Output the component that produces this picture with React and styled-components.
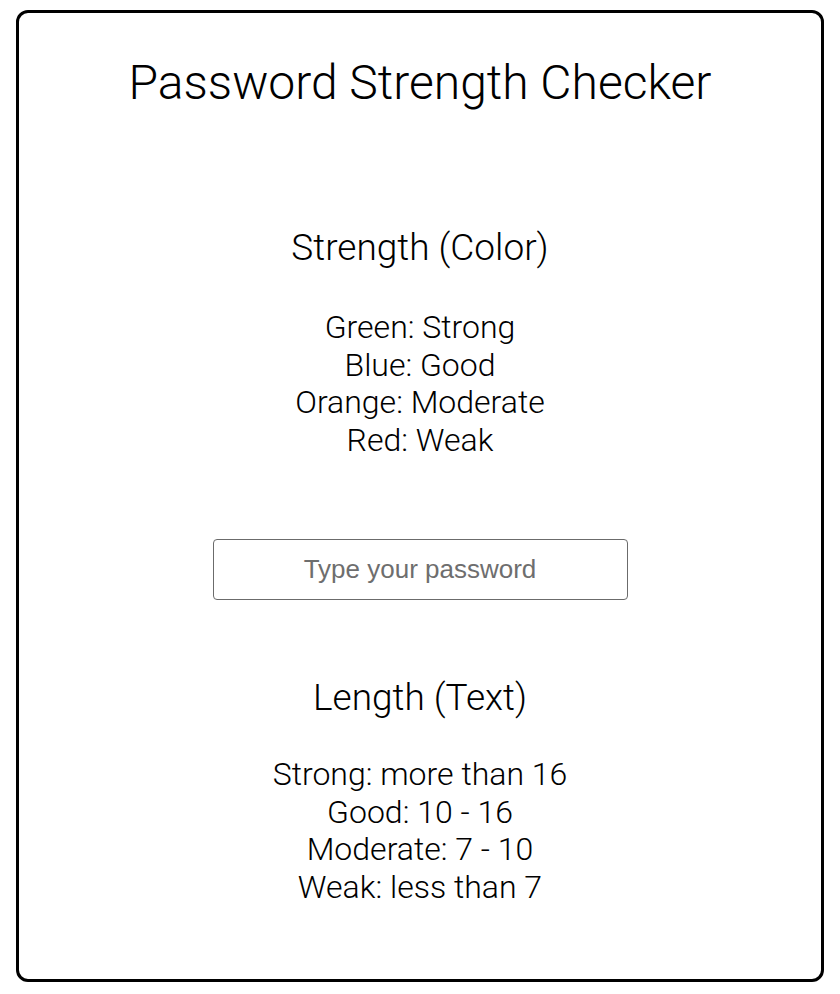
import React from 'react';
import styled, { createGlobalStyle } from 'styled-components';

const GlobalStyle = createGlobalStyle`
  body {
    margin: 0;
    background: #fff;
    font-family: Roboto, "Liberation Sans", sans-serif;
    font-weight: 300;
    color: #000;
  }
`;

const Card = styled.div`
  box-sizing: border-box;
  margin: 10px 16px 12px;
  height: 972px;
  border: 3px solid #000;
  border-radius: 12px;
  display: flex;
  flex-direction: column;
  align-items: center;
  text-align: center;
`;

const Title = styled.h1`
  margin: 41px 0 0;
  font-size: 48px;
  font-weight: 300;
  line-height: normal;
`;

const Section = styled.section`
  margin-top: ${(p) => p.$top}px;
`;

const Heading = styled.h2`
  margin: 0 0 ${(p) => p.$gap}px;
  font-size: 37px;
  font-weight: 300;
  line-height: normal;
`;

const Line = styled.div`
  font-size: 32px;
  line-height: 37.5px;
`;

const PasswordInput = styled.input`
  box-sizing: border-box;
  margin-top: 80px;
  width: 415px;
  height: 61px;
  border: 1.5px solid #6b6b6b;
  border-radius: 4px;
  font-family: "Liberation Sans", Arial, sans-serif;
  font-size: 26px;
  text-align: center;
  outline: none;

  &::placeholder {
    color: #6e6e6e;
  }
`;

const strength = ['Green: Strong', 'Blue: Good', 'Orange: Moderate', 'Red: Weak'];
const length = ['Strong: more than 16', 'Good: 10 - 16', 'Moderate: 7 - 10', 'Weak: less than 7'];

export default function App() {
  return (
    <>
      <GlobalStyle />
      <Card>
        <Title>Password Strength Checker</Title>
        <Section $top={115}>
          <Heading $gap={40}>Strength (Color)</Heading>
          {strength.map((s) => <Line key={s}>{s}</Line>)}
        </Section>
        <PasswordInput type="password" placeholder="Type your password" />
        <Section $top={76}>
          <Heading $gap={37}>Length (Text)</Heading>
          {length.map((s) => <Line key={s}>{s}</Line>)}
        </Section>
      </Card>
    </>
  );
}
